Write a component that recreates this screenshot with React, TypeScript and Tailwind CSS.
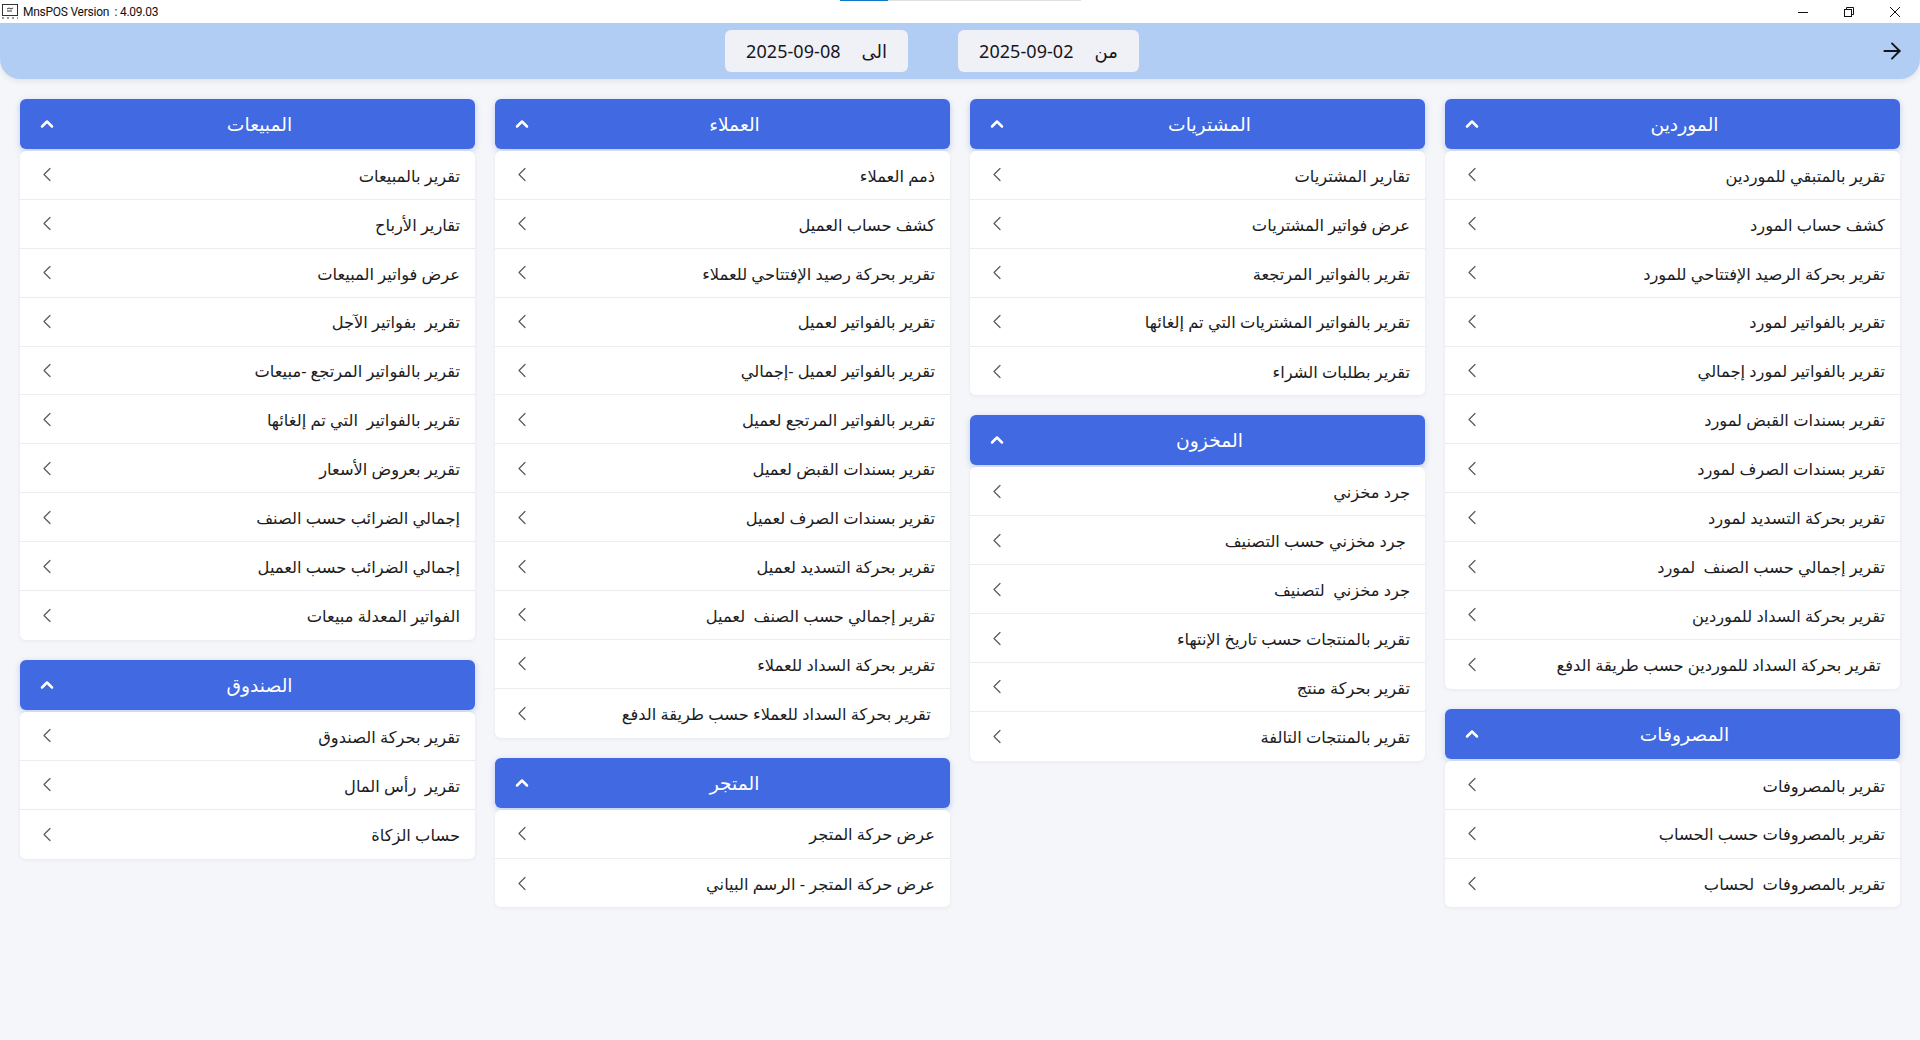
import { ArrowRight, ChevronLeft, ChevronUp } from "lucide-react";

type Section = { title: string; items: string[] };

// columns run right to left, same order as the app
const columns: Section[][] = [
  [
    {
      title: "الموردين",
      items: [
        "تقرير بالمتبقي للموردين",
        "كشف حساب المورد",
        "تقرير بحركة الرصيد الإفتتاحي للمورد",
        "تقرير بالفواتير لمورد",
        "تقرير بالفواتير لمورد إجمالي",
        "تقرير بسندات القبض لمورد",
        "تقرير بسندات الصرف لمورد",
        "تقرير بحركة التسديد لمورد",
        "تقرير إجمالي حسب الصنف  لمورد",
        "تقرير بحركة السداد للموردين",
        " تقرير بحركة السداد للموردين حسب طريقة الدفع",
      ],
    },
    {
      title: "المصروفات",
      items: ["تقرير بالمصروفات", "تقرير بالمصروفات حسب الحساب", "تقرير بالمصروفات  لحساب"],
    },
  ],
  [
    {
      title: "المشتريات",
      items: [
        "تقارير المشتريات",
        "عرض فواتير المشتريات",
        "تقرير بالفواتير المرتجعة",
        "تقرير بالفواتير المشتريات التي تم إلغائها",
        "تقرير بطلبات الشراء",
      ],
    },
    {
      title: "المخزون",
      items: [
        "جرد مخزني",
        " جرد مخزني حسب التصنيف",
        "جرد مخزني  لتصنيف",
        "تقرير بالمنتجات حسب تاريخ الإنتهاء",
        "تقرير بحركة منتج",
        "تقرير بالمنتجات التالفة",
      ],
    },
  ],
  [
    {
      title: "العملاء",
      items: [
        "ذمم العملاء",
        "كشف حساب العميل",
        "تقرير بحركة رصيد الإفتتاحي للعملاء",
        "تقرير بالفواتير لعميل",
        "تقرير بالفواتير لعميل -إجمالي",
        "تقرير بالفواتير المرتجع لعميل",
        "تقرير بسندات القبض لعميل",
        "تقرير بسندات الصرف لعميل",
        "تقرير بحركة التسديد لعميل",
        "تقرير إجمالي حسب الصنف  لعميل",
        "تقرير بحركة السداد للعملاء",
        " تقرير بحركة السداد للعملاء حسب طريقة الدفع",
      ],
    },
    {
      title: "المتجر",
      items: ["عرض حركة المتجر", "عرض حركة المتجر - الرسم البياني"],
    },
  ],
  [
    {
      title: "المبيعات",
      items: [
        "تقرير بالمبيعات",
        "تقارير الأرباح",
        "عرض فواتير المبيعات",
        "تقرير  بفواتير الآجل",
        "تقرير بالفواتير المرتجع -مبيعات",
        "تقرير بالفواتير  التي تم إلغائها",
        "تقرير بعروض الأسعار",
        "إجمالي الضرائب حسب الصنف",
        "إجمالي الضرائب حسب العميل",
        "الفواتير المعدلة مبيعات",
      ],
    },
    {
      title: "الصندوق",
      items: ["تقرير بحركة الصندوق", "تقرير  رأس المال", "حساب الزكاة"],
    },
  ],
];

function ReportPanel({ section }: { section: Section }) {
  return (
    <div className="flex flex-col gap-[2px]">
      <div className="flex h-[50px] items-center rounded-[6px] bg-[#4169e1] px-[15px] text-white shadow-[0_2px_6px_rgba(65,105,225,0.3)]">
        <span className="flex-1 text-center text-[18.7px] font-medium">{section.title}</span>
        <span className="flex w-6 justify-center">
          <ChevronUp size={20} strokeWidth={3} />
        </span>
      </div>
      <div className="rounded-[6px] bg-white shadow-[0_1px_4px_rgba(0,0,0,0.06)]">
        {section.items.map((item, i) => (
          <div
            key={i}
            className={`flex h-[48.9px] items-center justify-between px-[15px] ${
              i < section.items.length - 1 ? "border-b border-[#ebecf0]" : ""
            }`}
          >
            <span className="pt-[2px] text-[16.3px] whitespace-pre text-[#1c1c22]">{item}</span>
            <span className="flex w-6 justify-center text-[#555a60]">
              <ChevronLeft size={25} strokeWidth={1.2} />
            </span>
          </div>
        ))}
      </div>
    </div>
  );
}

function DateField({ label, value }: { label: string; value: string }) {
  return (
    <div className="flex h-[42px] items-center gap-[21px] rounded-[6px] bg-[#f0f1f6] px-[21px] text-[#16161c]">
      <span className="text-[18px]">{label}</span>
      <span dir="ltr" className="text-[18px] tracking-[0.05px]">
        {value}
      </span>
    </div>
  );
}

export default function App() {
  return (
    <div
      dir="rtl"
      className="flex h-[1040px] flex-col overflow-hidden bg-[#f5f6f9] font-['Noto_Sans','DejaVu_Sans',sans-serif]"
    >
      <div dir="ltr" className="relative flex h-[23px] shrink-0 items-center bg-white">
        <div className="absolute top-0 left-[840px] flex h-px">
          <div className="w-[48px] bg-[#0f78c8]" />
          <div className="w-[193px] bg-[#e0e0e0]" />
        </div>
        <svg className="ml-[2px] h-[17px] w-[16px] text-[#333]" viewBox="0 0 16 17" fill="none" stroke="currentColor" strokeWidth="1">
          <rect x="0.5" y="1.5" width="15" height="11" />
          <path d="M5 6l2-1 2 1 2-1M5 8h5" />
          <path d="M0 15h16" strokeDasharray="2 3" />
        </svg>
        <span className="ml-[5px] font-['Roboto',sans-serif] text-[12px] tracking-[-0.25px] text-[#111]">MnsPOS Version&nbsp; : 4.09.03</span>
        <div className="mr-[2px] ml-auto flex items-center text-[#111]">
          <span className="flex w-[46px] justify-center">
            <svg className="h-[10px] w-[10px]" viewBox="0 0 10 10" fill="none" stroke="currentColor" strokeWidth="1">
              <path d="M0 5.5h10" />
            </svg>
          </span>
          <span className="flex w-[46px] justify-center">
            <svg className="h-[10px] w-[10px]" viewBox="0 0 10 10" fill="none" stroke="currentColor" strokeWidth="1">
              <rect x="0.5" y="2.5" width="7" height="7" />
              <path d="M2.5 2.5v-2h7v7h-2" />
            </svg>
          </span>
          <span className="flex w-[46px] justify-center">
            <svg className="h-[10px] w-[10px]" viewBox="0 0 10 10" fill="none" stroke="currentColor" strokeWidth="1">
              <path d="M0 0l10 10M10 0L0 10" />
            </svg>
          </span>
        </div>
      </div>

      <div className="flex h-[56px] shrink-0 items-center rounded-b-[20px] bg-[#b2cdf3] shadow-[0_2px_6px_rgba(0,0,0,0.08)]">
        <div className="flex w-[56px] justify-center text-[#14141a]">
          <ArrowRight size={26} strokeWidth={1.8} />
        </div>
        <div className="flex flex-1 items-center justify-center gap-[50px]">
          <DateField label="من" value="2025-09-02" />
          <DateField label="الى" value="2025-09-08" />
        </div>
      </div>

      <div className="grid grid-cols-4 items-start gap-5 px-5 pt-5">
        {columns.map((sections, i) => (
          <div key={i} className="flex flex-col gap-5">
            {sections.map((section) => (
              <ReportPanel key={section.title} section={section} />
            ))}
          </div>
        ))}
      </div>
    </div>
  );
}
